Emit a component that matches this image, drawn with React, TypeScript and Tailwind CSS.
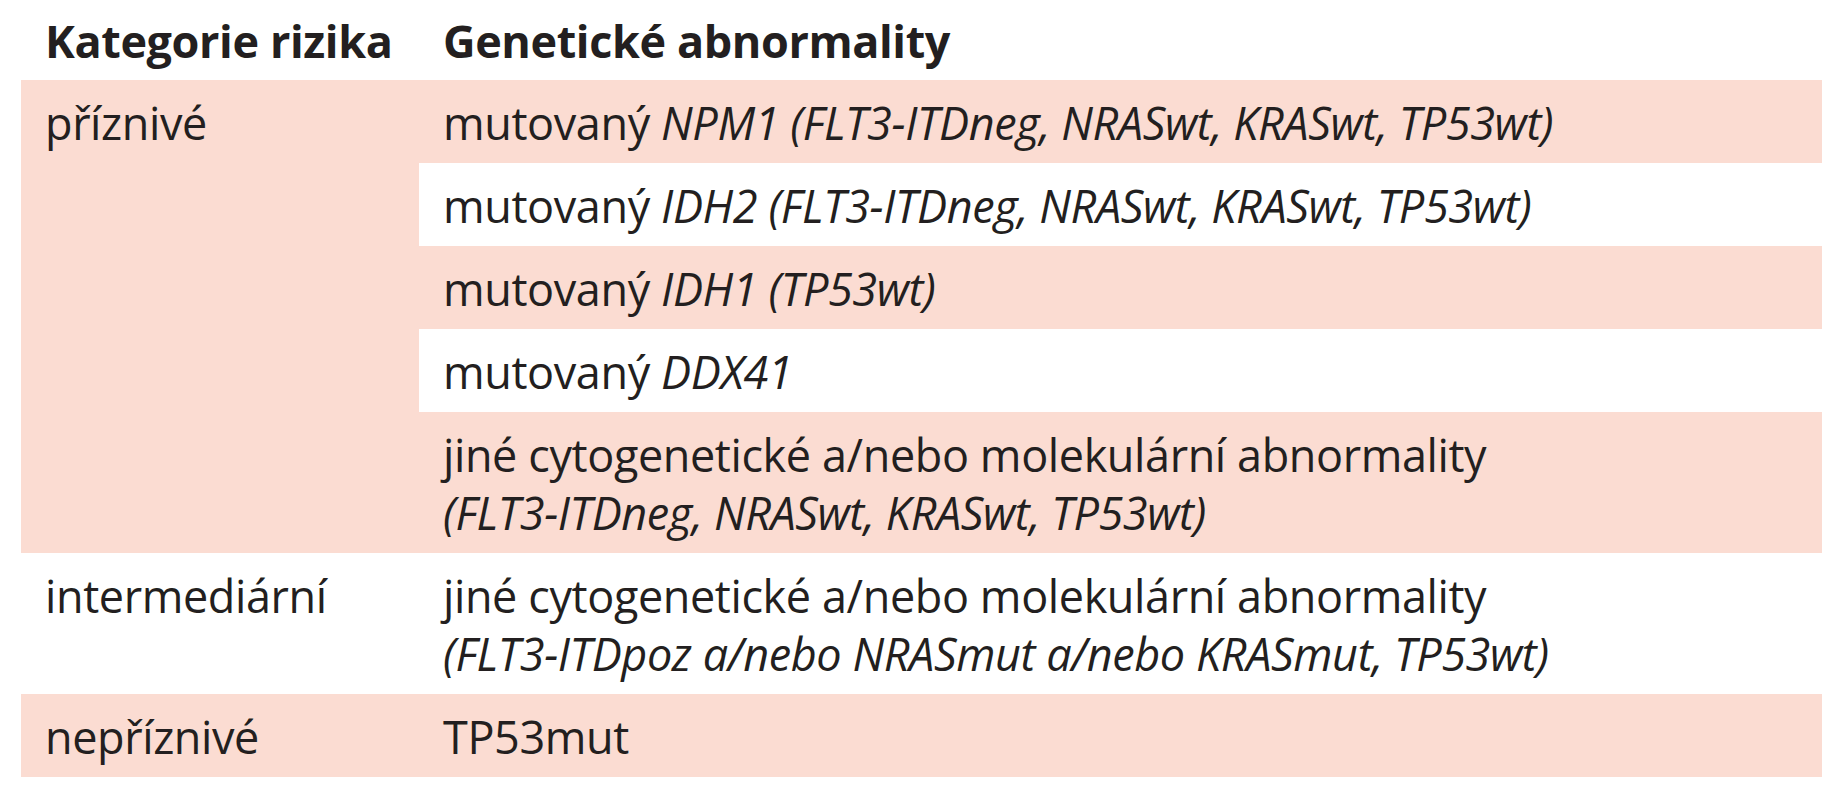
const font = { fontFamily: '"Open Sans", "Noto Sans", sans-serif' };

function Cell({ children, pink, className = '' }: { children: React.ReactNode; pink?: boolean; className?: string }) {
  return (
    <div className={`${pink ? 'bg-[#fbdcd2]' : 'bg-white'} pl-6 pr-4 pt-[14px] pb-[11px] ${className}`}>
      {children}
    </div>
  );
}

export default function App() {
  return (
    <div className="min-h-screen bg-white pl-[21px] pr-[13px] text-[#231f20] text-[45px] leading-[58px] tracking-[-0.4px]" style={font}>
      <div className="grid grid-cols-[398px_1fr]">
        <div className="pl-6 pt-[12px] pb-[10px] font-bold">Kategorie rizika</div>
        <div className="pl-6 pt-[12px] pb-[10px] font-bold">Genetické abnormality</div>

        <div className="row-span-5 bg-[#fbdcd2] pl-6 pt-[14px]">příznivé</div>
        <Cell pink>
          mutovaný <i>NPM1 (FLT3-ITDneg, NRASwt, KRASwt, TP53wt)</i>
        </Cell>
        <Cell>
          mutovaný <i>IDH2 (FLT3-ITDneg, NRASwt, KRASwt, TP53wt)</i>
        </Cell>
        <Cell pink>
          mutovaný <i>IDH1 (TP53wt)</i>
        </Cell>
        <Cell>
          mutovaný <i>DDX41</i>
        </Cell>
        <Cell pink>
          jiné cytogenetické a/nebo molekulární abnormality
          <br />
          <i>(FLT3-ITDneg, NRASwt, KRASwt, TP53wt)</i>
        </Cell>

        <Cell>intermediární</Cell>
        <Cell>
          jiné cytogenetické a/nebo molekulární abnormality
          <br />
          <i>(FLT3-ITDpoz a/nebo NRASmut a/nebo KRASmut, TP53wt)</i>
        </Cell>

        <Cell pink>nepříznivé</Cell>
        <Cell pink>TP53mut</Cell>
      </div>
    </div>
  );
}
